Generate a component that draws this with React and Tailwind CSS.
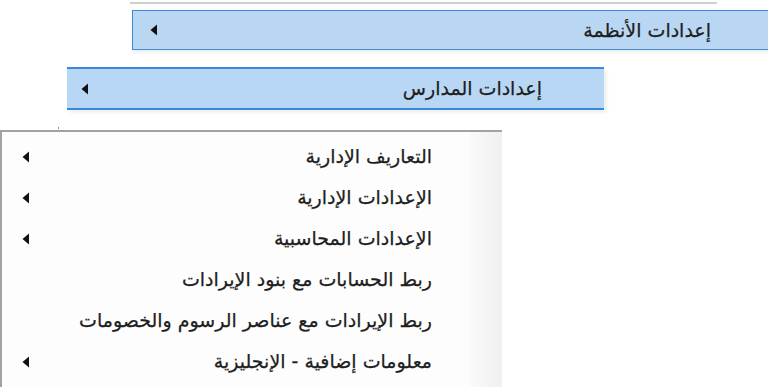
import React from "react";

function Arrow() {
  return (
    <svg width="8" height="12" viewBox="0 0 8 12" className="shrink-0">
      <polygon points="0.5,6 7,0.5 7,11.5" fill="#111" />
    </svg>
  );
}

const items = [
  { t: "التعاريف الإدارية", a: true },
  { t: "الإعدادات الإدارية", a: true },
  { t: "الإعدادات المحاسبية", a: true },
  { t: "ربط الحسابات مع بنود الإيرادات", a: false },
  { t: "ربط الإيرادات مع عناصر الرسوم والخصومات", a: false },
  { t: "معلومات إضافية - الإنجليزية", a: true },
];

export default function App() {
  return (
    <div
      className="w-[768px] h-[387px] overflow-hidden bg-white text-[#1e1e1e] [-webkit-text-stroke:0.25px_#1e1e1e]"
      style={{ fontFamily: '"DejaVu Sans", Tahoma, sans-serif' }}
    >
      <div className="ml-[130px] mt-[2px] h-[2px] w-[587px] bg-[#cfcfcf]" />
      <div
        dir="rtl"
        className="ml-[132px] mt-[6px] h-[40px] w-[640px] flex items-center justify-between border border-[#3f8ad9] bg-[#b9d7f3] pr-[60px] pl-[17px] shadow-[0_3px_3px_rgba(0,0,0,0.06)]"
      >
        <span className="text-[19px] leading-none">إعدادات الأنظمة</span>
        <Arrow />
      </div>
      <div
        dir="rtl"
        className="ml-[67px] mt-[17px] h-[43px] w-[537px] flex items-center justify-between border-y-2 border-[#3a88d9] bg-[#b8d7f4] pr-[62px] pl-[14px] shadow-[3px_3px_3px_rgba(0,0,0,0.06)]"
      >
        <span className="text-[19px] leading-none">إعدادات المدارس</span>
        <Arrow />
      </div>
      <div className="ml-[58px] mt-[17px] h-[2px] w-[1px] bg-[#999]" />
      <div className="flex mt-[1px] h-[300px]">
        <div className="w-[502px] border-t-2 border-l-2 border-[#a2a2a2] bg-[#fdfdfd] flex">
          <div className="flex-1 flex flex-col pt-[4px]">
            {items.map((it, i) => (
              <div
                key={i}
                dir="rtl"
                className="h-[41px] flex items-center justify-between pr-[38px] pl-[20px]"
              >
                <span className="text-[19px] leading-none">{it.t}</span>
                {it.a ? <Arrow /> : <span />}
              </div>
            ))}
          </div>
          <div className="w-[32px] bg-gradient-to-r from-[#fafafa] to-[#f0f0f0]" />
        </div>
      </div>
    </div>
  );
}
